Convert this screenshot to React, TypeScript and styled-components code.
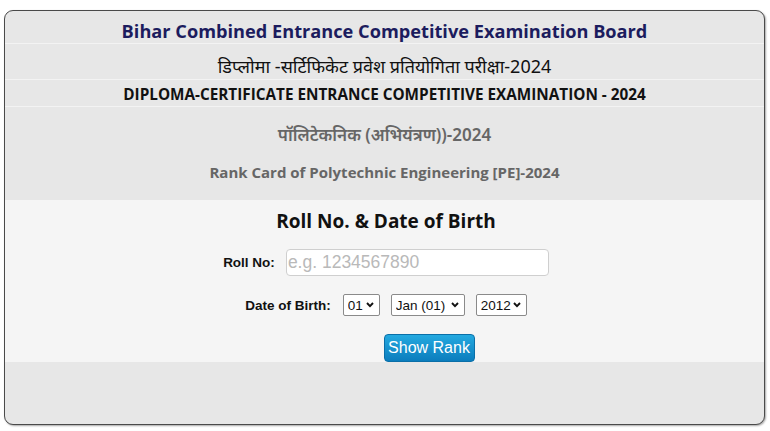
import * as React from "react";
import styled, { createGlobalStyle } from "styled-components";

const GlobalStyle = createGlobalStyle`
  html, body {
    margin: 0;
    padding: 0;
    background: #ffffff;
  }
  body {
    font-family: "Open Sans", "Noto Sans", Arial, sans-serif;
  }
`;

const Page = styled.div`
  padding: 10px 5px 6px 4px;
`;

const Board = styled.div`
  height: 413px;
  border: 1px solid #4a4a4a;
  border-radius: 9px;
  background: #e7e7e7;
  box-shadow: 1px 1px 2px rgba(0, 0, 0, 0.35);
  display: flex;
  flex-direction: column;
  overflow: hidden;
`;

const HeadRow = styled.div<{ $h: number; $pt: number }>`
  height: ${p => p.$h}px;
  display: flex;
  align-items: center;
  justify-content: center;
  padding-top: ${p => p.$pt}px;
  border-bottom: 1px solid #f3f3f3;
  box-sizing: border-box;
`;

const Title = styled.h1`
  margin: 0;
  font-size: 18.2px;
  font-weight: 700;
  color: #1c1c5e;
  line-height: 24px;
`;

const HindiLine = styled.div`
  font-family: "Noto Sans", "Open Sans", sans-serif;
  font-size: 18px;
  color: #111;
  line-height: 24px;
`;

const EnglishLine = styled.div`
  font-size: 15.3px;
  font-weight: 700;
  color: #111;
  line-height: 20px;
`;

const SubSection = styled.div`
  height: 93px;
  display: flex;
  flex-direction: column;
  align-items: center;
  padding-top: 16px;
  gap: 16px;
  box-sizing: border-box;
  color: #666;
  font-weight: 700;
`;

const SubHindi = styled.div`
  font-family: "Noto Sans", "Open Sans", sans-serif;
  font-size: 17px;
  font-weight: 600;
  line-height: 23px;
`;

const SubEnglish = styled.div`
  font-size: 15px;
  line-height: 20px;
`;

const FormPanel = styled.div`
  height: 162px;
  background: #f5f5f5;
  display: flex;
  flex-direction: column;
  align-items: center;
  box-sizing: border-box;
  padding-top: 9px;
`;

const FormTitle = styled.h2`
  margin: 0 0 0 3px;
  font-size: 19px;
  font-weight: 700;
  color: #111;
  line-height: 24px;
`;

const FieldRow = styled.div<{ $offset: number; $top: number; $gap: number }>`
  display: flex;
  align-items: center;
  gap: ${p => p.$gap}px;
  margin-top: ${p => p.$top}px;
  margin-left: ${p => p.$offset}px;
`;

const Label = styled.label`
  font-family: Arial, "Liberation Sans", sans-serif;
  font-size: 13.5px;
  font-weight: 700;
  color: #111;
`;

const RollInput = styled.input`
  width: 263px;
  height: 27px;
  box-sizing: border-box;
  border: 1px solid #cfcfcf;
  border-radius: 4px;
  padding: 0 6px 0 1px;
  font-family: Arial, "Liberation Sans", sans-serif;
  font-size: 17.5px;
  background: #fff;
  &::placeholder {
    color: #b9b9b9;
  }
`;

const Selects = styled.div`
  display: flex;
  gap: 11px;
`;

const SelectWrap = styled.div`
  position: relative;
  display: flex;
`;

const Select = styled.select<{ $w: number }>`
  -webkit-appearance: none;
  appearance: none;
  width: ${p => p.$w}px;
  height: 22px;
  box-sizing: border-box;
  font-family: Arial, "Liberation Sans", sans-serif;
  font-size: 13.5px;
  color: #111;
  border: 1px solid #8a8a8a;
  border-radius: 2px;
  background: #fff;
  padding: 0 0 0 4px;
  outline: none;
`;

const Chevron = styled.svg`
  position: absolute;
  right: 6px;
  top: 8px;
  pointer-events: none;
`;

const ShowButton = styled.button`
  margin-top: 18px;
  margin-left: 89px;
  width: 91px;
  height: 30px;
  border: 1px solid #0a6fa8;
  border-radius: 4px;
  background: linear-gradient(to bottom, #24a9e0, #0b7dbd);
  color: #fff;
  font-family: Arial, "Liberation Sans", sans-serif;
  font-size: 16px;
  padding: 0;
  cursor: pointer;
`;

const DateSelect = ({ w, value }: { w: number; value: string }) => (
  <SelectWrap>
    <Select $w={w} defaultValue={value}>
      <option>{value}</option>
    </Select>
    <Chevron width="8" height="6" viewBox="0 0 8 6">
      <path d="M1 1 L4 4.2 L7 1" fill="none" stroke="#111" strokeWidth="1.9" />
    </Chevron>
  </SelectWrap>
);

export default function App() {
  return (
    <>
      <GlobalStyle />
      <Page>
        <Board>
          <HeadRow $h={33} $pt={8}>
            <Title>Bihar Combined Entrance Competitive Examination Board</Title>
          </HeadRow>
          <HeadRow $h={36} $pt={8}>
            <HindiLine>डिप्लोमा -सर्टिफिकेट प्रवेश प्रतियोगिता परीक्षा-2024</HindiLine>
          </HeadRow>
          <HeadRow $h={27} $pt={1}>
            <EnglishLine>DIPLOMA-CERTIFICATE ENTRANCE COMPETITIVE EXAMINATION - 2024</EnglishLine>
          </HeadRow>
          <SubSection>
            <SubHindi>पॉलिटेकनिक (अभियंत्रण))-2024</SubHindi>
            <SubEnglish>Rank Card of Polytechnic Engineering [PE]-2024</SubEnglish>
          </SubSection>
          <FormPanel>
            <FormTitle>Roll No. &amp; Date of Birth</FormTitle>
            <FieldRow $offset={3} $top={16} $gap={11}>
              <Label htmlFor="roll">Roll No:</Label>
              <RollInput id="roll" placeholder="e.g. 1234567890" />
            </FieldRow>
            <FieldRow $offset={3} $top={18} $gap={12}>
              <Label>Date of Birth:</Label>
              <Selects>
                <DateSelect w={37} value="01" />
                <DateSelect w={74} value="Jan (01)" />
                <DateSelect w={51} value="2012" />
              </Selects>
            </FieldRow>
            <ShowButton>Show Rank</ShowButton>
          </FormPanel>
        </Board>
      </Page>
    </>
  );
}
